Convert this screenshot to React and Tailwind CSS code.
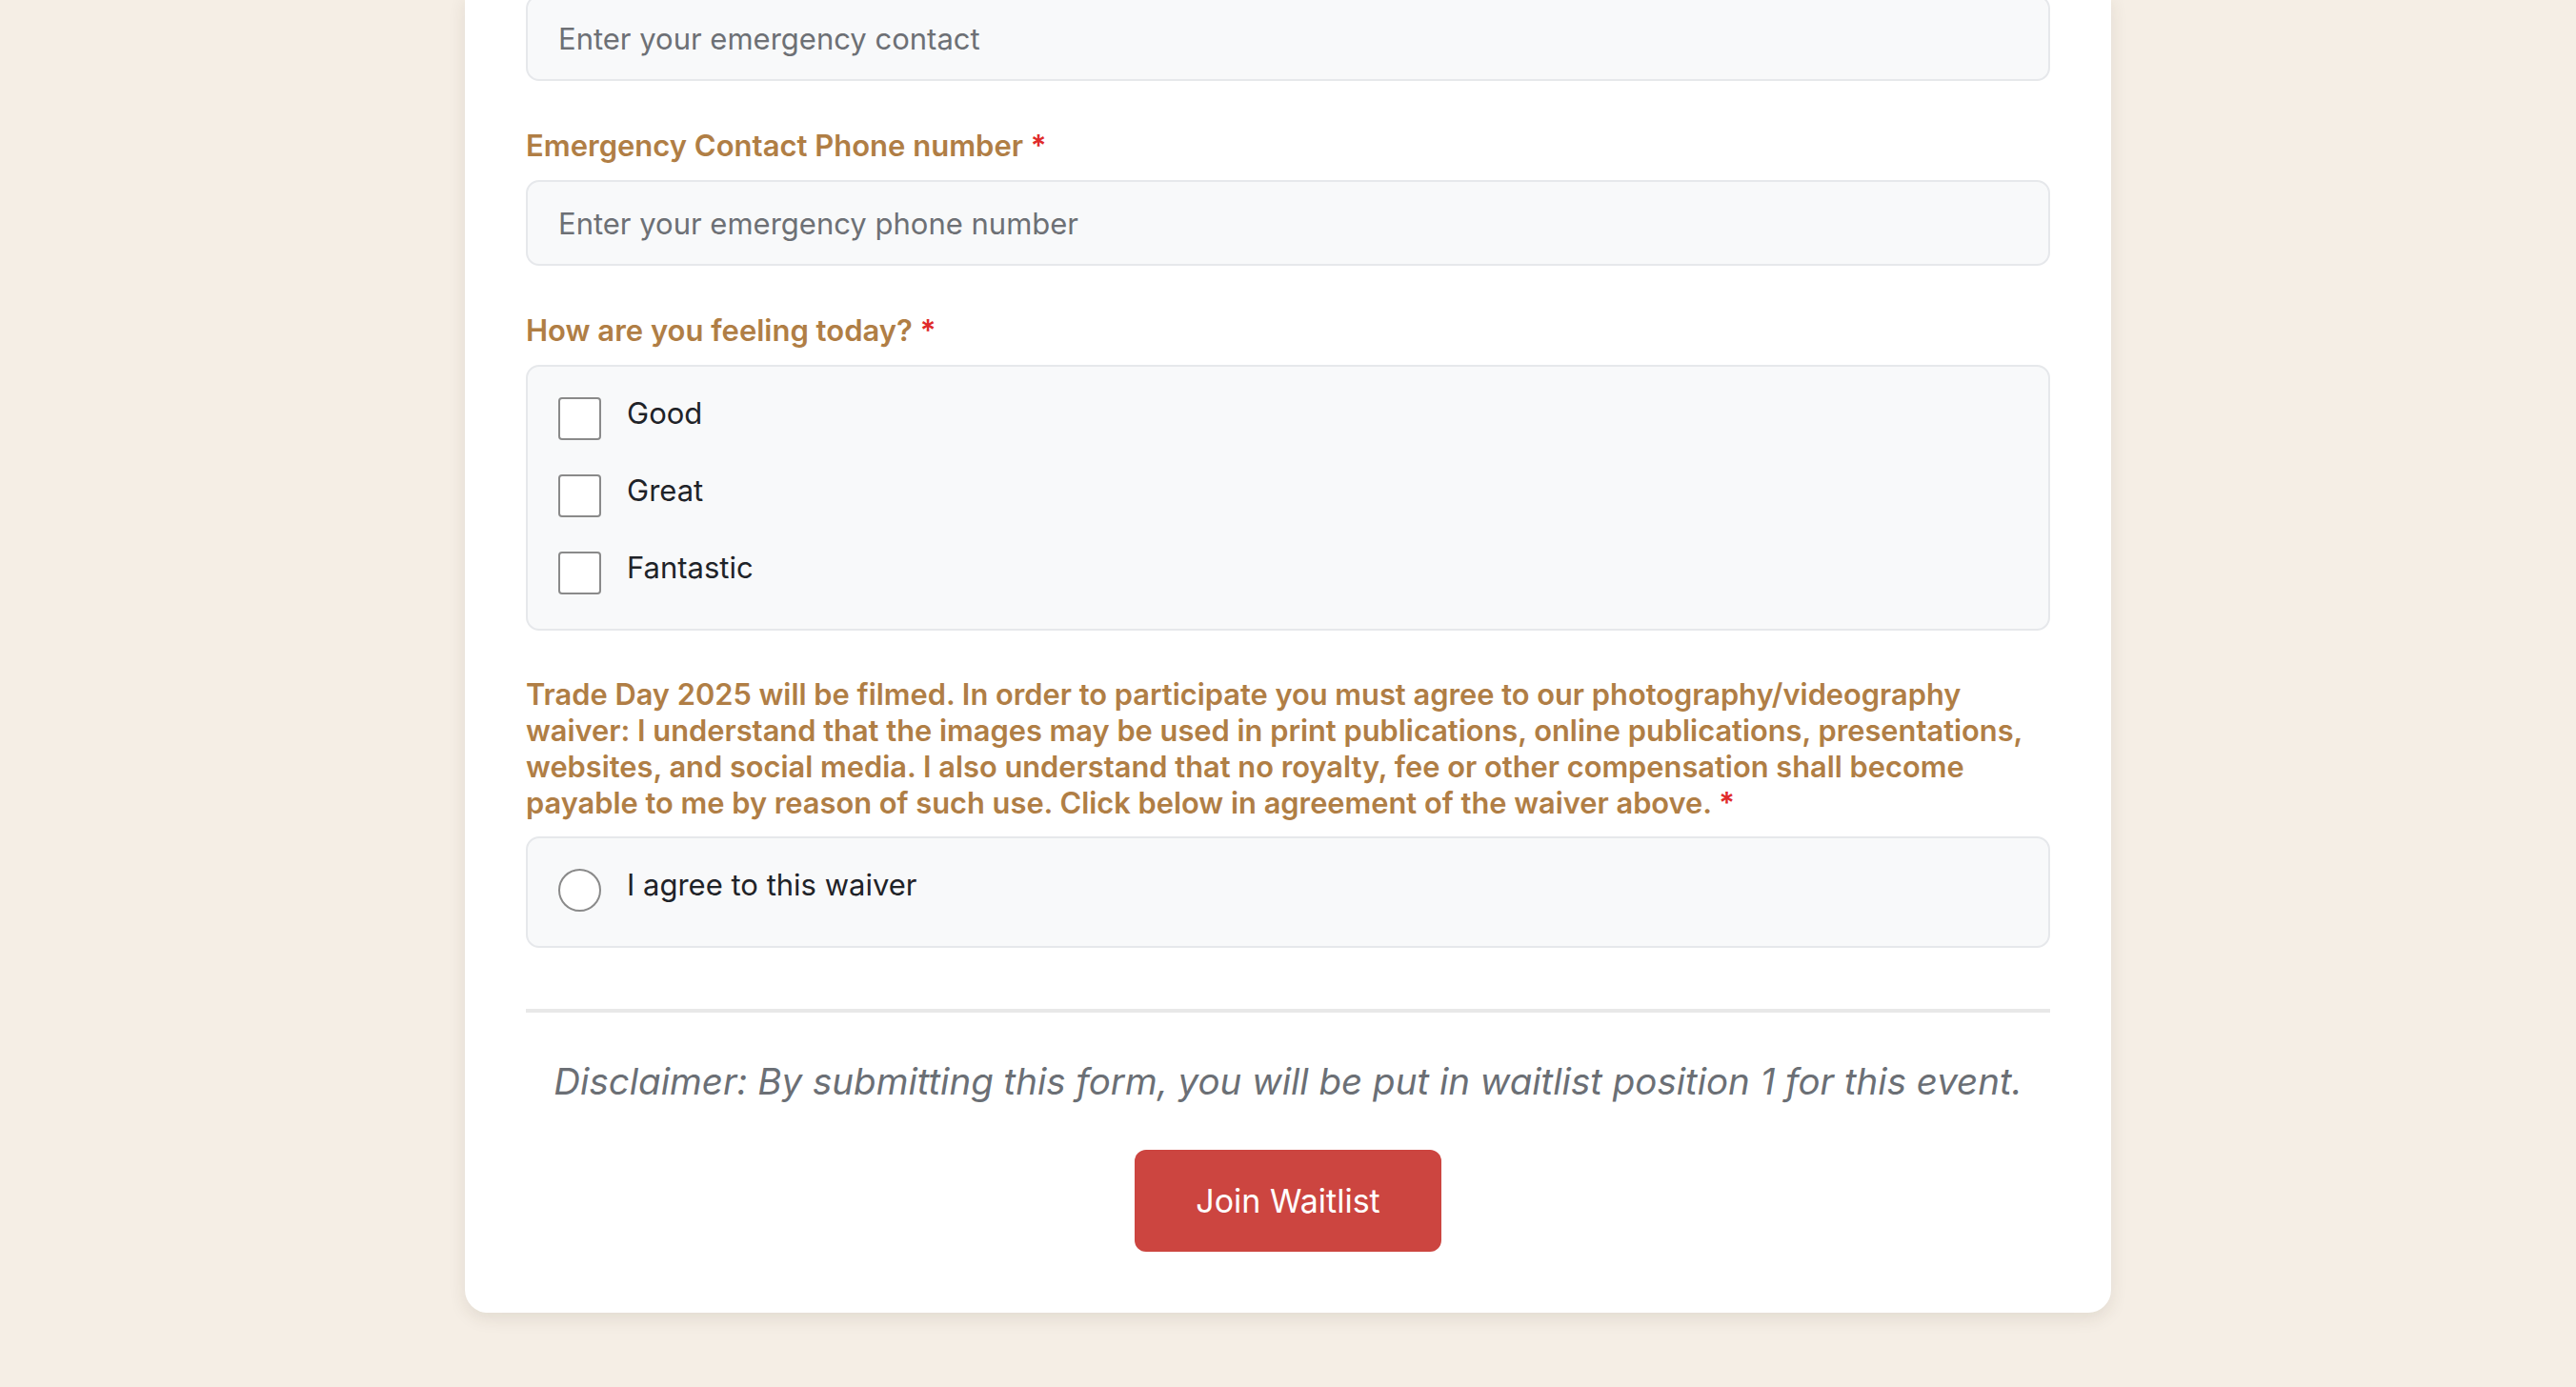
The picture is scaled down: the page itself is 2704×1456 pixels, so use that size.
import React from "react";

const labelCls =
  "block text-[31px] leading-[40px] font-semibold text-[#b07e45] mb-4";

function Req() {
  return <span className="text-[#e02b2b]"> *</span>;
}

function TextField({ placeholder }) {
  return (
    <input
      type="text"
      placeholder={placeholder}
      className="w-full h-[90px] px-8 rounded-[14px] border-2 border-[#e6e8eb] bg-[#f8f9fa] text-[31px] text-[#1f2328] placeholder:text-[#6d7075] outline-none"
    />
  );
}

function CheckRow({ label, round }) {
  return (
    <label className="flex items-start gap-[27px] h-[48px]">
      <span
        className={
          round
            ? "w-[45px] h-[45px] shrink-0 rounded-full border-2 border-[#8a8a8a] bg-white"
            : "w-[45px] h-[45px] shrink-0 rounded-[4px] border-2 border-[#8a8a8a] bg-white"
        }
      />
      <span className="text-[31px] leading-[34px] text-[#1f2328]">{label}</span>
    </label>
  );
}

export default function App() {
  return (
    <div
      className="w-full h-[1456px] overflow-hidden bg-[#f5eee5]"
      style={{ fontFamily: "Inter, 'Noto Sans', sans-serif" }}
    >
      <div className="w-[1728px] mx-auto -mt-[5px] bg-white rounded-b-[24px] shadow-[0_6px_18px_rgba(60,50,30,0.10)] px-16 pb-16">
        <TextField placeholder="Enter your emergency contact" />

        <div className="mt-12">
          <label className={labelCls}>
            Emergency Contact Phone number
            <Req />
          </label>
          <TextField placeholder="Enter your emergency phone number" />
        </div>

        <div className="mt-12">
          <label className={labelCls}>
            How are you feeling today?
            <Req />
          </label>
          <div className="rounded-[14px] border-2 border-[#e6e8eb] bg-[#f8f9fa] px-8 pt-8 pb-[33px] flex flex-col gap-[33px]">
            <CheckRow label="Good" />
            <CheckRow label="Great" />
            <CheckRow label="Fantastic" />
          </div>
        </div>

        <div className="mt-12">
          <p className="text-[30.8px] leading-[38px] font-semibold text-[#b07e45] mb-4">
            Trade Day 2025 will be filmed. In order to participate you must
            agree to our photography/videography
            <br />
            waiver: I understand that the images may be used in print
            publications, online publications, presentations,
            <br />
            websites, and social media. I also understand that no royalty, fee
            or other compensation shall become
            <br />
            payable to me by reason of such use. Click below in agreement of
            the waiver above.
            <Req />
          </p>
          <div className="rounded-[14px] border-2 border-[#e6e8eb] bg-[#f8f9fa] px-8 pt-8 pb-[33px]">
            <CheckRow label="I agree to this waiver" round />
          </div>
        </div>

        <div className="mt-16 h-[4px] bg-[#e8e8e8]" />

        <p className="mt-[45px] text-center italic text-[38.5px] leading-[54px] text-[#6b6f75]">
          Disclaimer: By submitting this form, you will be put in waitlist
          position 1 for this event.
        </p>

        <div className="mt-[45px] flex justify-center">
          <button className="px-16 py-[30px] rounded-[12px] bg-[#cc4540] text-white text-[34px] leading-[47px]">
            Join Waitlist
          </button>
        </div>
      </div>
    </div>
  );
}
